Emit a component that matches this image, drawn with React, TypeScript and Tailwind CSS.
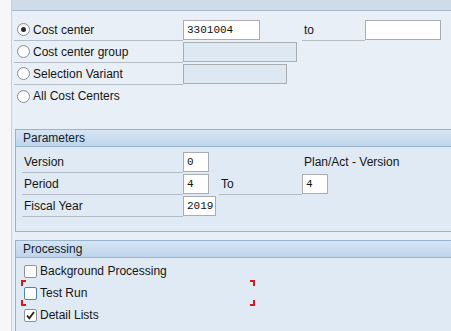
import React from 'react';

const font = { fontFamily: '"Liberation Sans", Arial, sans-serif' };

function Radio({ checked }: { checked?: boolean }) {
  return (
    <span className="w-[13px] h-[13px] rounded-full border border-[#8a8f96] bg-white flex items-center justify-center shrink-0 shadow-[inset_0_1px_1px_rgba(0,0,0,0.08)]">
      {checked && <span className="w-[5px] h-[5px] rounded-full bg-[#2b2b2b]" />}
    </span>
  );
}

function Check({ checked, focus }: { checked?: boolean; focus?: boolean }) {
  return (
    <span
      className={`w-[13px] h-[13px] rounded-[2px] border bg-white flex items-center justify-center shrink-0 ${
        focus ? 'border-[#4d7fb8]' : 'border-[#8e9297]'
      }`}
    >
      {checked && (
        <svg width="11" height="11" viewBox="0 0 11 11">
          <path d="M2 5.5 L4.3 8.3 L9 2" fill="none" stroke="#222" strokeWidth="1.8" />
        </svg>
      )}
    </span>
  );
}

function Field({ w, value, disabled }: { w: string; value?: string; disabled?: boolean }) {
  return (
    <div
      className={`${w} h-[20px] border border-[#a9adb2] flex items-center px-[3px] text-[11px] text-[#111] shrink-0 ${
        disabled ? 'bg-[#dde8f2]' : 'bg-white'
      }`}
      style={{ fontFamily: '"Liberation Mono", "Courier New", monospace' }}
    >
      {value}
    </div>
  );
}

function GroupHeader({ title }: { title: string }) {
  return (
    <div className="h-[18px] border-t border-b border-[#9ab3cd] bg-gradient-to-b from-[#d6e5f3] to-[#bed5eb] flex items-center pl-[7px] text-[12px] text-[#15202b]">
      {title}
    </div>
  );
}

export default function App() {
  return (
    <div className="w-[451px] h-[331px] flex overflow-hidden text-[12px] text-[#151515]" style={font}>
      <div className="w-[12px] bg-[#f6f7f9] border-r border-[#c6ced8] shrink-0" />
      <div className="flex-1 flex flex-col bg-[#e9eff6]">
        <div className="h-[11px] bg-[#cfdce8] border-b border-[#a9bacb] shrink-0" />

        {/* Selection */}
        <div className="pt-[8px] pl-[2px] flex flex-col">
          <div className="h-[22px] flex items-center">
            <div className="w-[169px] h-full border-b border-[#b4bcc6] flex items-center gap-[3px] pl-[3px]">
              <Radio checked />
              <span>Cost center</span>
            </div>
            <Field w="w-[77px]" value="3301004" />
            <div className="w-[42px]" />
            <div className="w-[63px] h-full border-b border-[#b4bcc6] flex items-center pl-[2px]">to</div>
            <Field w="w-[76px]" />
          </div>
          <div className="h-[22px] flex items-center">
            <div className="w-[169px] h-full border-b border-[#b4bcc6] flex items-center gap-[3px] pl-[3px]">
              <Radio />
              <span>Cost center group</span>
            </div>
            <Field w="w-[114px]" disabled />
          </div>
          <div className="h-[22px] flex items-center">
            <div className="w-[169px] h-full border-b border-[#b4bcc6] flex items-center gap-[3px] pl-[3px]">
              <Radio />
              <span>Selection Variant</span>
            </div>
            <Field w="w-[104px]" disabled />
          </div>
          <div className="h-[22px] flex items-center">
            <div className="w-[169px] h-full flex items-center gap-[3px] pl-[3px]">
              <Radio />
              <span>All Cost Centers</span>
            </div>
          </div>
        </div>

        {/* Parameters */}
        <div className="mt-[22px] ml-[3px] border-l border-[#9ab3cd] bg-[#dfeaf4] flex flex-col">
          <GroupHeader title="Parameters" />
          <div className="pt-[4px] pb-[14px] pl-[6px] flex flex-col border-b border-[#9ab3cd]">
            <div className="h-[22px] flex items-center">
              <div className="w-[161px] h-full border-b border-[#b4bcc6] flex items-center pl-[2px]">Version</div>
              <Field w="w-[26px]" value="0" />
              <div className="w-[95px]" />
              <span>Plan/Act - Version</span>
            </div>
            <div className="h-[22px] flex items-center">
              <div className="w-[161px] h-full border-b border-[#b4bcc6] flex items-center pl-[2px]">Period</div>
              <Field w="w-[26px]" value="4" />
              <div className="w-[10px]" />
              <div className="w-[83px] h-full border-b border-[#b4bcc6] flex items-center pl-[2px]">To</div>
              <Field w="w-[26px]" value="4" />
            </div>
            <div className="h-[22px] flex items-center">
              <div className="w-[161px] h-full border-b border-[#b4bcc6] flex items-center pl-[2px]">Fiscal Year</div>
              <Field w="w-[33px]" value="2019" />
            </div>
          </div>
        </div>

        {/* Processing */}
        <div className="mt-[8px] ml-[3px] border-l border-[#9ab3cd] bg-[#dfeaf4] flex flex-col flex-1">
          <GroupHeader title="Processing" />
          <div className="pt-[2px] pl-[8px] flex flex-col">
            <div className="h-[22px] flex items-center gap-[3px]">
              <Check />
              <span>Background Processing</span>
            </div>
            <div className="h-[22px] flex items-center gap-[3px] relative">
              <Check focus />
              <span>Test Run</span>
              <span className="absolute left-[-3px] top-[-2px] w-[5px] h-[6px] border-l-2 border-t-2 border-[#e0141b]" />
              <span className="absolute left-[-3px] bottom-[-2px] w-[5px] h-[6px] border-l-2 border-b-2 border-[#e0141b]" />
              <span className="absolute left-[226px] top-[-2px] w-[5px] h-[6px] border-r-2 border-t-2 border-[#e0141b]" />
              <span className="absolute left-[226px] bottom-[-2px] w-[5px] h-[6px] border-r-2 border-b-2 border-[#e0141b]" />
            </div>
            <div className="h-[22px] flex items-center gap-[3px]">
              <Check checked />
              <span>Detail Lists</span>
            </div>
          </div>
        </div>
      </div>
    </div>
  );
}
